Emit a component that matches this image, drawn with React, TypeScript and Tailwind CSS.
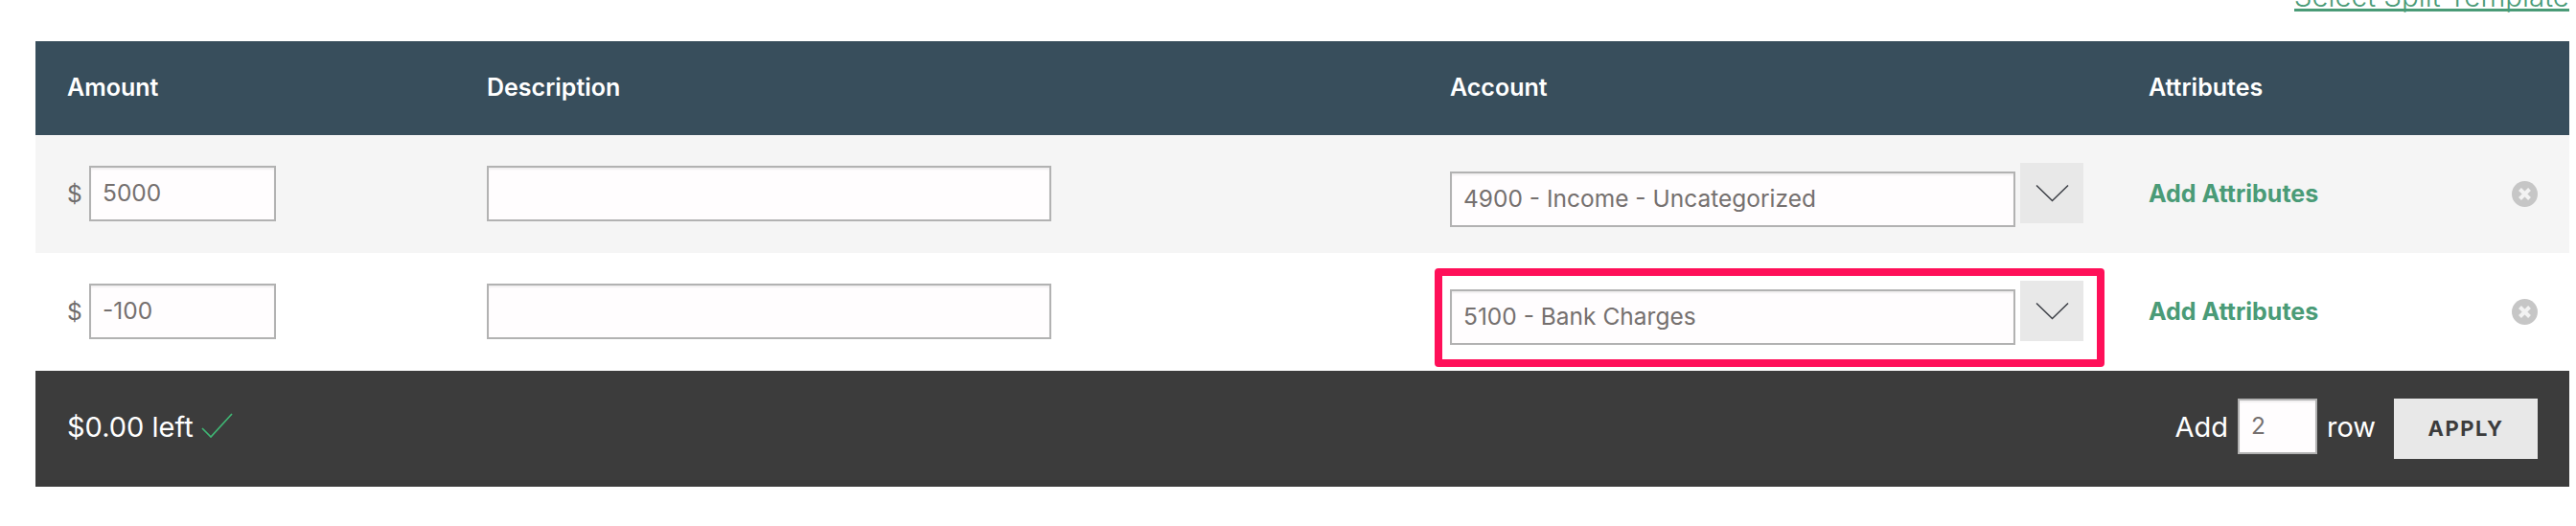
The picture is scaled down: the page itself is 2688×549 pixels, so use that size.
import React from "react";

const font = { fontFamily: "Inter, 'Liberation Sans', sans-serif" };

function TextBox({ value, className }: { value: string; className: string }) {
  return (
    <div className={`flex h-[58px] items-center border-2 border-[#b2b2b2] bg-[#fffdfe] px-3 pb-[2px] text-[24.5px] text-[#75706f] shadow-[inset_0_2px_2px_rgba(0,0,0,0.06)] ${className}`}>
      {value}
    </div>
  );
}

function Chevron() {
  return (
    <svg width="35" height="19" viewBox="0 0 35 19" fill="none" aria-hidden="true">
      <path d="M1 1.5 L17.5 17.5 L34 1.5" stroke="#3a3d44" strokeWidth="1.5" />
    </svg>
  );
}

function CloseIcon() {
  return (
    <svg width="27" height="27" viewBox="0 0 27 27" aria-hidden="true">
      <circle cx="13.5" cy="13.5" r="13.5" fill="#c6c6c6" />
      <path d="M8.5 8.5 L18.5 18.5 M18.5 8.5 L8.5 18.5" stroke="#f2f2f2" strokeWidth="4" />
    </svg>
  );
}

function Row({ amount, account, striped }: { amount: string; account: string; striped?: boolean }) {
  return (
    <div className={`grid h-[123px] grid-cols-[438px_1005px_729px_1fr] pl-[33px] ${striped ? "bg-[#f5f5f5]" : "bg-white"}`}>
      <div className="flex items-center gap-[7px] self-start pt-[32px]">
        <span className="w-[16px] text-[24.5px] leading-[56px] text-[#6f6d6c]">$</span>
        <TextBox value={amount} className="w-[195px]" />
      </div>
      <div className="pt-[32px]">
        <TextBox value="" className="w-[589px]" />
      </div>
      <div className="flex items-start pt-[29px]">
        <TextBox value={account} className="mt-[9px] w-[590px]" />
        <div className="ml-[5px] flex h-[63px] w-[66px] items-center justify-center bg-[#e8e8e8]">
          <Chevron />
        </div>
      </div>
      <div className="flex items-start justify-between pr-[33px]">
        <a className="mt-[46px] text-[25px] leading-[30px] font-bold text-[#4a9b77]">Add Attributes</a>
        <div className="mt-[48px]">
          <CloseIcon />
        </div>
      </div>
    </div>
  );
}

export default function App() {
  return (
    <div className="h-[549px] w-[2688px] overflow-hidden bg-white" style={font}>
      <div className="flex h-[43px] justify-end pr-[7px]">
        <a className="-mt-[24px] h-[36px] border-b-[3px] border-[#4a9b77] text-[29.6px] leading-[41px] font-light text-[#4a9b77]">
          Select Split Template
        </a>
      </div>
      <div className="ml-[37px] w-[2644px]">
        <div className="grid h-[98px] grid-cols-[438px_1005px_729px_1fr] items-center bg-[#384e5c] pl-[33px] text-[25px] font-semibold text-white">
          <div>Amount</div>
          <div>Description</div>
          <div>Account</div>
          <div>Attributes</div>
        </div>
        <Row amount="5000" account="4900 - Income - Uncategorized" striped />
        <div className="relative">
          <Row amount="-100" account="5100 - Bank Charges" />
          <div className="absolute top-[16px] left-[1460px] h-[103px] w-[699px] rounded-[4px] border-[8px] border-[#ff1059]" />
        </div>
        <div className="flex h-[121px] items-center justify-between bg-[#3c3c3c] pr-[33px] pl-[33px] text-white">
          <div className="flex items-center gap-[8px] text-[29px]">
            <span className="-mt-[3px]">$0.00 left</span>
            <svg className="-mt-[8px]" width="33" height="26" viewBox="0 0 33 26" fill="none" aria-hidden="true">
              <path d="M1 16 L10 25 L32 1" stroke="#3fb674" strokeWidth="1.7" />
            </svg>
          </div>
          <div className="flex items-center text-[29px]">
            <span className="-mt-[3px]">Add</span>
            <TextBox value="2" className="mx-[10px] -mt-[5px] w-[83px]" />
            <span className="-mt-[3px]">row</span>
            <button className="ml-[19px] flex h-[63px] w-[150px] items-center justify-center bg-[#e8e8e8] text-[22px] font-bold tracking-[1.5px] text-[#3c3c3c]">
              APPLY
            </button>
          </div>
        </div>
      </div>
    </div>
  );
}
